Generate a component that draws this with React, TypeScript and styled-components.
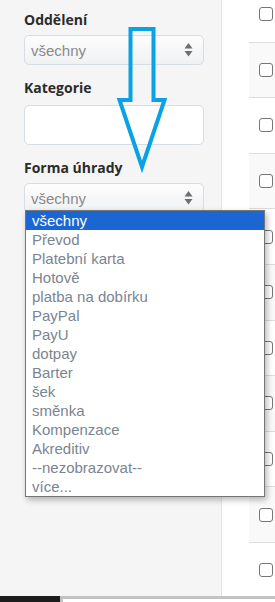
import React from "react";
import styled, { createGlobalStyle } from "styled-components";

const Global = createGlobalStyle`
  html, body { margin: 0; padding: 0; background: #ffffff; }
  body { width: 275px; height: 602px; overflow: hidden; }
  #root { width: 275px; height: 602px; }
`;

const Page = styled.div`
  position: relative;
  width: 275px;
  height: 602px;
  display: flex;
  flex-direction: column;
  overflow: hidden;
`;

const Content = styled.div`
  flex: 1;
  display: flex;
  min-height: 0;
`;

const Sidebar = styled.aside`
  width: 221px;
  flex: none;
  background: #f5f5f5;
  border-right: 1px solid #dfe6ec;
  box-sizing: border-box;
  width: 222px;
  padding: 10px 0 0 24px;
  display: flex;
  flex-direction: column;
`;

const Group = styled.div<{ $tight?: boolean }>`
  position: relative;
  display: flex;
  flex-direction: column;
  margin-bottom: 13px;
`;

const Label = styled.label<{ $gap?: number }>`
  font-family: "Open Sans", "Liberation Sans", sans-serif;
  font-weight: 700;
  font-size: 14px;
  line-height: 20px;
  color: #2b2b2b;
  margin-bottom: ${(p) => p.$gap ?? 5}px;
`;

const Select = styled.div`
  box-sizing: border-box;
  width: 180px;
  height: 30px;
  border: 1px solid #d6dde4;
  border-radius: 5px;
  background: linear-gradient(to bottom, #fdfdfd, #f0f1f3);
  display: flex;
  align-items: center;
  justify-content: space-between;
  padding: 0 10px 0 6px;
  font-family: "Liberation Sans", Arial, sans-serif;
  font-size: 15px;
  color: #8a8a8a;
`;

const TextInput = styled.div`
  box-sizing: border-box;
  width: 180px;
  height: 40px;
  border: 1px solid #d6dde4;
  border-radius: 5px;
  background: #ffffff;
`;

const Arrows = styled.svg`
  width: 9px;
  height: 16px;
  flex: none;
`;

const DropList = styled.ul`
  position: absolute;
  left: 1px;
  top: calc(100% - 3px);
  z-index: 5;
  box-sizing: border-box;
  width: 240px;
  margin: 0;
  padding: 0;
  list-style: none;
  background: #ffffff;
  border: 1px solid #767676;
  box-shadow: 2px 3px 6px rgba(0, 0, 0, 0.28);
`;

const Option = styled.li<{ $selected?: boolean }>`
  height: 19px;
  line-height: 19px;
  padding-left: 6px;
  font-family: "Liberation Sans", Arial, sans-serif;
  font-size: 15px;
  white-space: nowrap;
  color: ${(p) => (p.$selected ? "#ffffff" : "#7a8592")};
  background: ${(p) => (p.$selected ? "#1b66d3" : "transparent")};
`;

const Main = styled.main`
  flex: 1;
  background: #ffffff;
  padding-left: 27px;
  overflow: hidden;
`;

const Table = styled.div`
  margin-top: -13px;
  display: flex;
  flex-direction: column;
`;

const Row = styled.div<{ $striped?: boolean }>`
  box-sizing: border-box;
  height: 55.6px;
  border-bottom: 1px solid #dddddd;
  background: ${(p) => (p.$striped ? "#f9f9f9" : "#ffffff")};
  display: flex;
  align-items: center;
  padding-left: 10px;
`;

const Checkbox = styled.span`
  box-sizing: border-box;
  width: 14px;
  height: 14px;
  border: 1.5px solid #767676;
  border-radius: 3px;
  background: #ffffff;
  flex: none;
`;

const BottomBar = styled.div`
  height: 6px;
  flex: none;
  display: flex;
`;

const DarkTab = styled.div`
  width: 60px;
  background: #1d1d1d;
`;

const ScrollTrack = styled.div`
  flex: 1;
  background: #c2c2c2;
  padding: 3px 0 0 3px;
  display: flex;
`;

const ScrollInner = styled.div`
  flex: 1;
  background: #ffffff;
`;

const BlueArrow = styled.svg`
  position: absolute;
  left: 0;
  top: 0;
  width: 275px;
  height: 602px;
  pointer-events: none;
  z-index: 10;
`;

const UpDown = () => (
  <Arrows viewBox="0 0 9 16">
    <polygon points="4.5,1 8.5,6.5 0.5,6.5" fill="#6e6e6e" />
    <polygon points="0.5,9 8.5,9 4.5,14.5" fill="#6e6e6e" />
  </Arrows>
);

const options = [
  "všechny",
  "Převod",
  "Platební karta",
  "Hotově",
  "platba na dobírku",
  "PayPal",
  "PayU",
  "dotpay",
  "Barter",
  "šek",
  "směnka",
  "Kompenzace",
  "Akreditiv",
  "--nezobrazovat--",
  "více...",
];

export default function App() {
  const rows = Array.from({ length: 11 }, (_, i) => i);
  return (
    <>
      <Global />
      <Page>
        <Content>
          <Sidebar>
            <Group>
              <Label>Oddělení</Label>
              <Select>
                <span>všechny</span>
                <UpDown />
              </Select>
            </Group>
            <Group>
              <Label $gap={7}>Kategorie</Label>
              <TextInput />
            </Group>
            <Group>
              <Label>Forma úhrady</Label>
              <Select>
                <span>všechny</span>
                <UpDown />
              </Select>
              <DropList>
                {options.map((o, i) => (
                  <Option key={o} $selected={i === 0}>
                    {o}
                  </Option>
                ))}
              </DropList>
            </Group>
          </Sidebar>
          <Main>
            <Table>
              {rows.map((i) => (
                <Row key={i} $striped={i % 2 === 1}>
                  <Checkbox />
                </Row>
              ))}
            </Table>
          </Main>
        </Content>
        <BottomBar>
          <DarkTab />
          <ScrollTrack>
            <ScrollInner />
          </ScrollTrack>
        </BottomBar>
        <BlueArrow viewBox="0 0 275 602">
          <polygon
            points="130.5,29 153.5,29 153.5,100 164.5,100 142,167 119.5,100 130.5,100"
            fill="none"
            stroke="#0aa2e4"
            strokeWidth="4"
            strokeLinejoin="miter"
          />
        </BlueArrow>
      </Page>
    </>
  );
}
